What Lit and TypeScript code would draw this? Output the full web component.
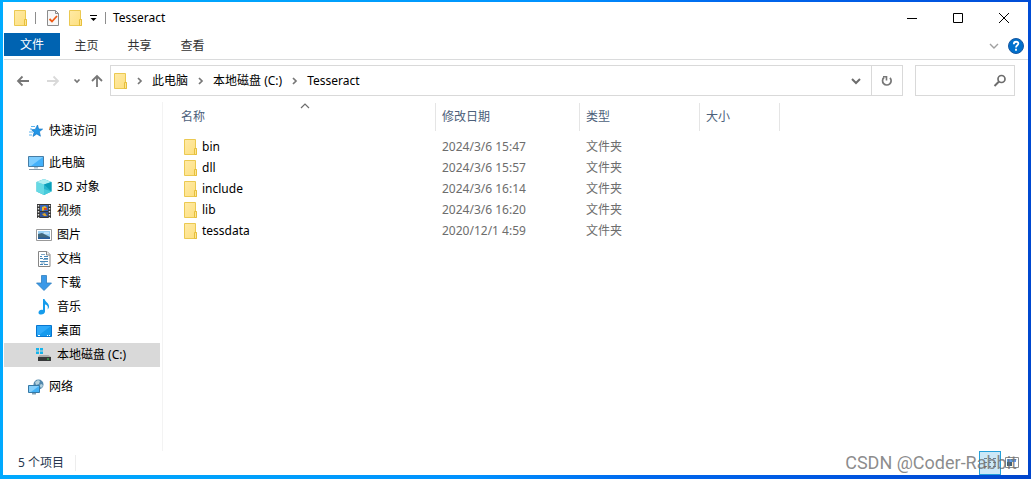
import { LitElement, html, css, svg } from "lit";
import { customElement } from "lit/decorators.js";
import { classMap } from "lit/directives/class-map.js";

const folder = () => html`<svg class="folder" viewBox="1 0 14 16" aria-hidden="true">
  <defs><linearGradient id="f" x1="0" y1="0" x2="1" y2="1"><stop offset="0" stop-color="#ffeaa6" /><stop offset="1" stop-color="#fddf7e" /></linearGradient></defs>
  <path d="M1.500 .5h11v9h1v6h-12z" fill="url(#f)" stroke="#ebc951" />
  <path d="M11.500 15.500v-6h2v6z" fill="#ffe693" stroke="#e6bf3d" />
</svg>`;

const glyphs: Record<string, unknown> = {
  star: svg`<path d="M9.500 2l1.100 4 4 .1-3.200 2.600 1 4.500-3.600-2.300-3.800 2.500 1.200-4.300-2.700-2.400 3.800-.3z" fill="#2396e6" stroke="#1478c8" stroke-width=".7"/><path d="M3 3.500h4M2 6h2M1 9h4M1 12h3" stroke="#5eb4ee"/>`,
  pc: svg`<path d="M.5 1.500h15v10h-15z" fill="#43b1fb" stroke="#477da5"/><path d="M1 2h14L3 11H1z" fill="#7dcdff"/><path d="M6 12h4v1.500h-4z" fill="#a9c2d2"/><path d="M1 14.500h14" stroke="#8499a9"/>`,
  cube: svg`<path d="M8 0l7.500 3v9.500L8 16 .5 12.500V3z" fill="#26b6ce"/><path d="M.5 3L8 5.500V16L.5 12.500z" fill="#66d9e4"/><path d="M.5 3L8 0l7.500 3L8 5.500z" fill="#b0eff2"/><path d="M8 5.500L15.500 3v9.500z" fill="#0a9eb9"/><path d="M8 10l7.500 2.500L8 16z" fill="#48cbdb"/>`,
  film: svg`<path d="M1 1h14v14H1z" fill="#373737"/><path d="M4 2h8v6H4z" fill="#3567bd"/><path d="M4 9h8v5H4z" fill="#315398"/><path d="M6 4l3-1 2 2-2 2-3 1z" fill="#e8b72e"/><path d="M8 5h3v2H8z" fill="#d44328"/><path d="M6 11l3-1 2 3H8z" fill="#dda52e"/><path d="M2.500 2v13M13.500 2v13" stroke="#e4e4e4" stroke-width="1.400" stroke-dasharray="1.500 1.500"/>`,
  picture: svg`<path d="M.5 2.500h15v11H.5z" fill="#fff" stroke="#999"/><path d="M2 4h12v8H2z" fill="#9bd1f5"/><path d="M2 7l4-1 8 4v2H2z" fill="#42697e"/><path d="M2 10.500h12V12H2z" fill="#255da0"/><path d="M8 6h5" stroke="#e9f7ff"/>`,
  doc: svg`<path d="M2.500.5h8.500l3 3v12H2.500z" fill="#fff" stroke="#868686"/><path d="M10.500.5v3.500H14" fill="#eee" stroke="#868686"/><path d="M4 5.500h2M8 5.500h4M4 7.500h3M8 7.500h4M4 10.500h8M4 13.500h3M8 13.500h4" stroke="#4686b7"/><path d="M5 3.500h4M7 8.500h5M5 12h4" stroke="#7faac9"/>`,
  down: svg`<path d="M5.500.5h5V8h5L8 15.500.5 8h5z" fill="#3b99e8" stroke="#2d7ebf" stroke-width=".8"/>`,
  music: svg`<path d="M7 0h1.500c.6 3 5 4 4.500 8-.2 1.300-.8 2-1.500 2.500C12.500 7 11 6 9 5.500V12.500C9 16 3 16.500 2.500 14c-.3-2.500 2.500-4 4.500-3z" fill="#169cec"/>`,
  desktop: svg`<path d="M.5 2.500h15v11H.5z" fill="#159aed" stroke="#0876cf"/><path d="M1 3h14L3 12H1z" fill="#2faafa"/><path d="M2 12.500h2M11 12.500h1M13 12.500h1" stroke="#fff"/>`,
  disk: svg`<path d="M0 1h3v2.500H0zM4 1h3v2.500H4zM0 4.500h3V7H0zM4 4.500h3V7H4z" fill="#14b4ec"/><path d="M3.500 8h9L15 10H2z" fill="#a9abac"/><path d="M2 10h13v4H2z" fill="#37393a"/><path d="M11 12h2" stroke="#3bdb54"/>`,
  network: svg`<circle cx="10.500" cy="5.500" r="5" fill="#5288ad"/><path d="M7 3l3-2 2 1-1 3-3 1zM11 6l3-1 1 2-2 2z" fill="#b3d0dc"/><path d="M.5 6.500h11v7H.5z" fill="#42b1f6" stroke="#3578a5"/><path d="M1 7h10L3 13H1z" fill="#83cefb"/><path d="M4 14h4v1.500H4z" fill="#83a2b5"/>`,
};

const places = [
  { icon: "star", label: "快速访问", level: 0 },
  { icon: "pc", label: "此电脑", level: 0, gap: true },
  { icon: "cube", label: "3D 对象", level: 1 },
  { icon: "film", label: "视频", level: 1 },
  { icon: "picture", label: "图片", level: 1 },
  { icon: "doc", label: "文档", level: 1 },
  { icon: "down", label: "下载", level: 1 },
  { icon: "music", label: "音乐", level: 1 },
  { icon: "desktop", label: "桌面", level: 1 },
  { icon: "disk", label: "本地磁盘 (C:)", level: 1, selected: true },
  { icon: "network", label: "网络", level: 0, gap: true },
];

const files = [
  ["bin", "2024/3/6 15:47"],
  ["dll", "2024/3/6 15:57"],
  ["include", "2024/3/6 16:14"],
  ["lib", "2024/3/6 16:20"],
  ["tessdata", "2020/12/1 4:59"],
];

const line = (d: string, color = "#6d6d6d", width = 2) =>
  html`<svg class="icon" viewBox="0 0 16 16" aria-hidden="true"><path d=${d} fill="none" stroke=${color} stroke-width=${width} /></svg>`;

@customElement("app-root")
export class AppRoot extends LitElement {
  static styles = css`
    :host {
      display: block;
      font: 12px/16px "Noto Sans", "Noto Sans CJK SC", sans-serif;
      color: #000;
    }
    * { box-sizing: border-box; }
    button {
      font: inherit; color: inherit; background: none; border: 0; padding: 0; margin: 0;
      display: flex; align-items: center; justify-content: center;
    }
    .icon { width: 16px; height: 16px; flex: none; display: block; }
    .folder { width: 14px; height: 16px; flex: none; display: block; }
    .frame {
      min-height: 100vh; display: flex; padding: 2px 3px 4px;
      background: linear-gradient(100deg, #00acff 0%, #00a0fc 30%, #0091ff 50%, #0068ee 65%, #0054df 85%, #0045cc 100%);
    }
    .window { flex: 1; min-width: 0; background: #fff; display: flex; flex-direction: column; }
    .title { display: flex; align-items: center; height: 31px; padding: 0 1px 0 11px; }
    .sep { width: 1px; height: 12px; background: #8d8d8d; }
    .quick { display: flex; align-items: center; flex: 1; gap: 7px; }
    .quick .tight { display: flex; gap: 8px; margin-left: 2px; }
    .quick .more { width: 8px; }
    .name { font-size: 12px; font-weight: 400; margin: 0; }
    .controls { display: flex; }
    .controls button { width: 46px; height: 31px; }
    .ribbon {
      display: flex; align-items: center; height: 27px; border-bottom: 1px solid #dadbdc;
      margin-left: 1px; padding-right: 4px; color: #333;
    }
    .tab { width: 53px; height: 25px; align-self: flex-start; }
    .tab.file { width: 56px; height: 23px; background: #0063b1; color: #fff; }
    .spacer { flex: 1; }
    .expand { margin-right: 6px; }
    .address { display: flex; align-items: center; padding: 5px 13px 6px 12px; }
    .history { display: flex; align-items: center; gap: 8px; padding-right: 5px; }
    .history .pair { display: flex; align-items: center; gap: 14px; padding-right: 4px; }
    .history .recent { width: 8px; }
    .path { display: flex; flex: 1; min-width: 0; height: 31px; border: 1px solid #d9d9d9; align-items: center; padding-left: 3px; }
    .crumb { white-space: nowrap; padding-right: 1px; }
    .arrow { width: 8px; height: 8px; flex: none; margin: 0 8px; }
    .path .drop { width: 30px; }
    .path .refresh { width: 31px; height: 29px; border-left: 1px solid #d9d9d9; }
    .search { display: flex; align-items: center; width: 100px; height: 31px; border: 1px solid #d9d9d9; margin-left: 12px; padding-right: 6px; }
    .search input { flex: 1; min-width: 0; border: 0; outline: 0; padding: 0 6px; font: inherit; background: none; }
    .main { display: flex; flex: 1; }
    .places { width: 160px; border-right: 1px solid #f3f3f3; padding: 17px 2px 0 1px; }
    .list { list-style: none; margin: 0; padding: 0; }
    .place { display: flex; align-items: center; height: 24px; gap: 5px; padding-left: 24px; color: inherit; text-decoration: none; }
    .place.child { padding-left: 32px; }
    .place.selected { background: #d9d9d9; }
    .group { margin-top: 8px; }
    .files { flex: 1; min-width: 0; padding: 1px 0 0 12px; }
    table { border-collapse: separate; border-spacing: 0; table-layout: fixed; width: 605px; }
    th, td { padding: 0 6px; text-align: left; font-weight: 400; white-space: nowrap; }
    th { position: relative; height: 28px; border-right: 1px solid #e5e5e5; color: #4c607a; }
    .c-name { width: 261px; }
    .c-date { width: 144px; }
    .c-type { width: 120px; }
    .c-size { width: 80px; }
    .sort { position: absolute; top: 0; left: 50%; width: 10px; height: 6px; margin-left: -5px; }
    .rowgap td { height: 5px; }
    .row td { height: 21px; color: #6d6d6d; }
    .row .item { color: #000; padding-left: 9px; }
    .entry { display: flex; align-items: center; gap: 4px; }
    .status { display: flex; align-items: center; height: 24px; padding: 0 5px 0 15px; color: #26364d; position: relative; }
    .status .count { padding-right: 11px; border-right: 1px solid #ededed; }
    .status .view { width: 22px; height: 24px; }
    .status .on { background: #cce8f7; border: 1px solid #26a0da; }
    .watermark {
      position: absolute; right: 11px; top: 0; font: 18px/24px Roboto, sans-serif;
      color: rgba(110, 110, 110, 0.8); pointer-events: none;
    }
  `;

  render() {
    const chevron = html`<svg class="arrow" viewBox="0 0 8 8" aria-hidden="true"><path d="M2 1l3 3-3 3" fill="none" stroke="#777" stroke-width="1.700" /></svg>`;
    return html`<div class="frame"><div class="window">
      <header class="title">
        <div class="quick">
          ${folder()}
          <span class="sep"></span>
          <div class="tight">
            <button aria-label="属性"><svg class="icon" viewBox="0 0 16 16"><path d="M2.500.5h8l3 3v12h-11z" fill="#f8f8f8" stroke="#8c8c8c" /><path d="M10.500.5v3h3" fill="none" stroke="#8c8c8c" /><path d="M4.500 9l2.500 2.500 5-5.500" fill="none" stroke="#f05a14" stroke-width="1.800" /></svg></button>
            <button aria-label="新建文件夹">${folder()}</button>
          </div>
          <button class="more" aria-label="自定义快速访问工具栏"><svg width="8" height="8" viewBox="0 0 8 8"><path d="M0 1.500h7" stroke="#000" /><path d="M.5 4h6l-3 3z" /></svg></button>
          <span class="sep"></span>
          <h1 class="name">Tesseract</h1>
        </div>
        <div class="controls">
          <button aria-label="最小化">${line("M3 8.500h10", "#000", 1)}</button>
          <button aria-label="最大化">${line("M3.500 3.500h9v9h-9z", "#000", 1)}</button>
          <button aria-label="关闭">${line("M3 3l10 10M13 3L3 13", "#000", 1)}</button>
        </div>
      </header>
      <nav class="ribbon" aria-label="功能区">
        <button class="tab file">文件</button>
        ${["主页", "共享", "查看"].map((t) => html`<button class="tab">${t}</button>`)}
        <span class="spacer"></span>
        <button class="expand" aria-label="展开功能区">${line("M4 6l4 4 4-4", "#a0a0a0", 1.4)}</button>
        <button aria-label="帮助"><svg class="icon" viewBox="0 0 16 16"><circle cx="8" cy="8" r="7.500" fill="#0070cc" stroke="#1857a0" /><path d="M5.800 6.200c0-3.400 4.800-3 4.500-.5C10.200 7.300 8 7.200 8 9.500M8 10.700v2" fill="none" stroke="#fff" stroke-width="1.800" /></svg></button>
      </nav>
      <div class="address">
        <div class="history">
          <div class="pair">
            <button aria-label="后退">${line("M14 8H3M7.500 3.500L3 8l4.500 4.500", "#777", 1.8)}</button>
            <button aria-label="前进">${line("M2 8h11M8.500 3.500L13 8l-4.500 4.500", "#d9d9d9", 1.800)}</button>
          </div>
          <button class="recent" aria-label="最近浏览的位置"><svg width="8" height="8" viewBox="0 0 8 8"><path d="M1.500 2.500L4 5l2.500-2.500" fill="none" stroke="#777" stroke-width="1.700" /></svg></button>
          <button aria-label="上移">${line("M8 14V3M3 8l5-5 5 5", "#777", 1.800)}</button>
        </div>
        <div class="path">
          ${folder()}
          ${["此电脑", "本地磁盘 (C:)", "Tesseract"].map((c) => html`${chevron}<button class="crumb">${c}</button>`)}
          <span class="spacer"></span>
          <button class="drop" aria-label="以前的位置">${line("M4 6l4 4 4-4", "#6d6d6d", 2)}</button>
          <button class="refresh" aria-label="刷新"><svg class="icon" viewBox="0 0 16 16"><path d="M5 4.500A4.300 4.300 0 1 0 11 4.800" fill="none" stroke="#777" stroke-width="1.700" /><path d="M4 3.800h3.500v3.700" fill="none" stroke="#777" stroke-width="1.600" /></svg></button>
        </div>
        <label class="search">
          <input type="search" aria-label="搜索" />
          <svg class="icon" viewBox="0 0 16 16" aria-hidden="true"><circle cx="9.500" cy="6" r="3.500" fill="none" stroke="#6d6d6d" stroke-width="1.700" /><path d="M7 8.500L2.500 13" stroke="#6d6d6d" stroke-width="2" /></svg>
        </label>
      </div>
      <div class="main">
        <nav class="places" aria-label="导航窗格"><ul class="list">
          ${places.map((p) => html`<li class=${classMap({ group: !!p.gap })}>
            <a href="#" class=${classMap({ place: true, child: p.level === 1, selected: !!p.selected })}>
              <svg class="icon" viewBox="0 0 16 16" aria-hidden="true">${glyphs[p.icon]}</svg><span>${p.label}</span>
            </a>
          </li>`)}
        </ul></nav>
        <main class="files">
          <table>
            <thead><tr>
              <th class="c-name" aria-sort="ascending">名称<svg class="sort" viewBox="0 0 10 6"><path d="M1 5l4-4 4 4" fill="none" stroke="#6d6d6d" stroke-width="1.200" /></svg></th>
              <th class="c-date">修改日期</th><th class="c-type">类型</th><th class="c-size">大小</th>
            </tr></thead>
            <tbody>
              <tr class="rowgap" aria-hidden="true"><td colspan="4"></td></tr>
              ${files.map(([name, date]) => html`<tr class="row">
                <td class="item"><span class="entry">${folder()}<span>${name}</span></span></td>
                <td>${date}</td><td>文件夹</td><td></td>
              </tr>`)}
            </tbody>
          </table>
        </main>
      </div>
      <footer class="status">
        <span class="count">5 个项目</span>
        <span class="spacer"></span>
        <button class="view on" aria-label="详细信息"><svg class="icon" viewBox="0 0 16 16"><path d="M2 3.500h3M2 7.500h3M2 11.500h3M7 3.500h2M11 3.500h3M7 7.500h2M11 7.500h3M7 11.500h2M11 11.500h3" stroke="#71818d" /><path d="M2 12h2" stroke="#c74b35" /></svg></button>
        <button class="view" aria-label="大图标"><svg class="icon" viewBox="0 0 16 16"><path d="M1.500 2.500h13v10h-13z" fill="#fff" stroke="#8c8c8c" /><path d="M3 4h9v3H3z" fill="#5d9cec" /><path d="M3 7h5v4H3z" fill="#3f5f78" /></svg></button>
        <span class="watermark">CSDN @Coder-Rabbit</span>
      </footer>
    </div></div>`;
  }
}
